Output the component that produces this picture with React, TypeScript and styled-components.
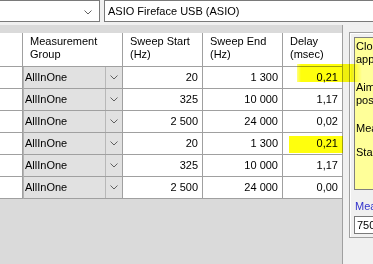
import React from "react";
import styled, { createGlobalStyle } from "styled-components";

const GlobalStyle = createGlobalStyle`
  body {
    margin: 0;
    background: #f0f0f0;
    font-family: "Liberation Sans", Arial, sans-serif;
    font-size: 11px;
    color: #000;
  }
`;

const Page = styled.div`
  position: relative;
  width: 373px;
  height: 264px;
  overflow: hidden;
  display: flex;
  flex-direction: column;
`;

const TopBar = styled.div`
  display: flex;
  height: 22px;
  gap: 4px;
  flex-shrink: 0;
`;

const DeviceSelect = styled.div`
  width: 100px;
  box-sizing: border-box;
  background: #fff;
  border: 1px solid #7a7a7a;
  border-left: none;
  display: flex;
  align-items: center;
  justify-content: flex-end;
  padding: 2px 7px 0 0;
`;

const AsioField = styled.div`
  flex: 1;
  box-sizing: border-box;
  background: #fff;
  border: 1px solid #7a7a7a;
  border-right: none;
  padding-left: 3px;
  line-height: 20px;
  white-space: nowrap;
`;

const Body = styled.div`
  display: flex;
  flex: 1;
  margin-top: 3px;
`;

const GridArea = styled.div`
  width: 344px;
  box-sizing: border-box;
  background: #dadada;
  border-right: 1px solid #a0a0a0;
  padding-top: 8px;
`;

const Table = styled.div`
  display: grid;
  grid-template-columns: 23px 100px 80px 80px 59px;
  grid-auto-rows: 22px;
  grid-template-rows: 34px;
`;

const Cell = styled.div<{ $last?: boolean; $align?: "left" | "right" }>`
  box-sizing: border-box;
  background: #fff;
  border-bottom: 1px solid #a0a0a0;
  border-right: ${(p) => (p.$last ? "none" : "1px solid #a0a0a0")};
  text-align: ${(p) => p.$align || "left"};
  padding: 0 4px 0 0;
  line-height: 21px;
  white-space: nowrap;
  overflow: hidden;
`;

const HeadCell = styled(Cell)`
  line-height: 13px;
  padding: 2px 0 0 7px;
`;

const ComboCell = styled.div`
  box-sizing: border-box;
  border-right: 1px solid #a0a0a0;
  border-bottom: 1px solid #a0a0a0;
  border-left: 1px solid #b4b4b4;
  background: #e1e1e1;
  display: flex;
`;

const ComboText = styled.div`
  flex: 1;
  padding-left: 1px;
  line-height: 21px;
  border-right: 1px solid #b8b8b8;
`;

const ComboArrow = styled.div`
  width: 16px;
  display: flex;
  align-items: center;
  justify-content: center;
`;

const SidePanel = styled.div`
  flex: 1;
  padding: 7px 0 0 6px;
`;

const GroupBox = styled.div`
  box-sizing: border-box;
  height: 206px;
  border: 1px solid #a0a0a0;
  border-right: none;
  box-shadow: inset 1px 1px 0 #fff;
  padding: 4px 0 0 4px;
`;

const NoteBox = styled.div`
  height: 153px;
  box-sizing: border-box;
  background: #ffff99;
  border: 1px solid #808080;
  border-right: none;
  padding: 2px 0 0 1px;
  line-height: 13px;
  white-space: nowrap;
  overflow: hidden;
`;

const Para = styled.p<{ $gap: number }>`
  margin: 0 0 ${(p) => p.$gap}px 0;
`;

const LinkLabel = styled.div`
  margin-top: 10px;
  color: #3333cc;
  line-height: 13px;
  padding-left: 1px;
  white-space: nowrap;
`;

const SmallInput = styled.div`
  margin-top: 3px;
  height: 18px;
  box-sizing: border-box;
  background: #fff;
  border: 1px solid #7a7a7a;
  border-right: none;
  padding-left: 2px;
  line-height: 16px;
`;

const Highlight = styled.div<{ $fade?: boolean }>`
  position: absolute;
  background: ${(p) =>
    p.$fade
      ? "linear-gradient(to right, rgba(255,255,0,0.5) 0px, rgba(255,255,0,0.95) 4px, rgba(255,255,0,0.95) 55px, rgba(255,255,0,0) 100%)"
      : "rgba(255,255,0,0.95)"};
  mix-blend-mode: multiply;
  pointer-events: none;
`;

const Chevron = () => (
  <svg width="8" height="5" viewBox="0 0 8 5">
    <polyline points="0.5,0.5 4,4 7.5,0.5" fill="none" stroke="#606060" strokeWidth="1" />
  </svg>
);

type Row = {
  start: string;
  end: string;
  delay: string;
};

const rows: Row[] = [
  { start: "20", end: "1 300", delay: "0,21" },
  { start: "325", end: "10 000", delay: "1,17" },
  { start: "2 500", end: "24 000", delay: "0,02" },
  { start: "20", end: "1 300", delay: "0,21" },
  { start: "325", end: "10 000", delay: "1,17" },
  { start: "2 500", end: "24 000", delay: "0,00" },
];

export default function App() {
  return (
    <Page>
      <GlobalStyle />
      <TopBar>
        <DeviceSelect>
          <Chevron />
        </DeviceSelect>
        <AsioField>ASIO Fireface USB (ASIO)</AsioField>
      </TopBar>
      <Body>
        <GridArea>
          <Table>
            <HeadCell />
            <HeadCell>
              Measurement
              <br />
              Group
            </HeadCell>
            <HeadCell>
              Sweep Start
              <br />
              (Hz)
            </HeadCell>
            <HeadCell>
              Sweep End
              <br />
              (Hz)
            </HeadCell>
            <HeadCell $last>
              Delay
              <br />
              (msec)
            </HeadCell>
            {rows.map((r, i) => (
              <React.Fragment key={i}>
                <Cell />
                <ComboCell>
                  <ComboText>AllInOne</ComboText>
                  <ComboArrow>
                    <Chevron />
                  </ComboArrow>
                </ComboCell>
                <Cell $align="right">{r.start}</Cell>
                <Cell $align="right">{r.end}</Cell>
                <Cell $align="right" $last>
                  {r.delay}
                </Cell>
              </React.Fragment>
            ))}
          </Table>
        </GridArea>
        <SidePanel>
          <GroupBox>
            <NoteBox>
              <Para $gap={15}>
                Close all other audio
                <br />
                applications first.
              </Para>
              <Para $gap={15}>
                Aim for a clean level,
                <br />
                possibly without clipping.
              </Para>
              <Para $gap={11}>Measure all speakers.</Para>
              <Para $gap={0}>Start the sweep.</Para>
            </NoteBox>
            <LinkLabel>Measurement level</LinkLabel>
            <SmallInput>750</SmallInput>
          </GroupBox>
        </SidePanel>
      </Body>
      <Highlight $fade style={{ left: 297, top: 64, width: 65, height: 18 }} />
      <Highlight style={{ left: 289, top: 136, width: 54, height: 17 }} />
    </Page>
  );
}
